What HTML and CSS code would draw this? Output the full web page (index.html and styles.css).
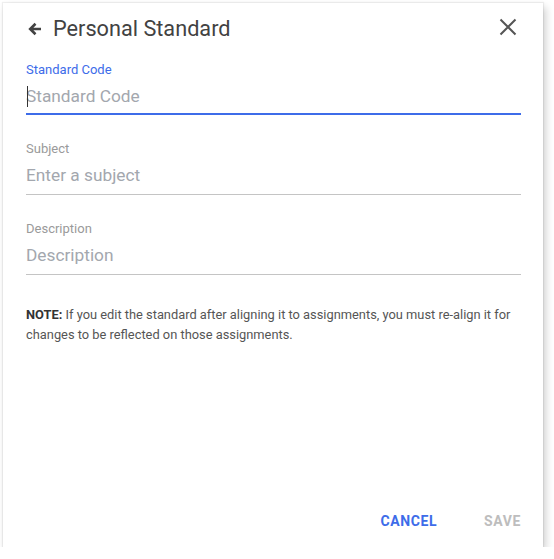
FILE: index.html
```html
<!DOCTYPE html>
<html>
<head>
<meta charset="utf-8">
<link rel="stylesheet" href="styles.css">
</head>
<body>
<div class="dialog">
  <div class="header">
    <svg class="back" width="16" height="16" viewBox="0 0 16 16"><path d="M14 8H3.5M8.5 2.8L3.2 8l5.3 5.2" fill="none" stroke="#424242" stroke-width="2.6" stroke-linejoin="miter"/></svg>
    <div class="title">Personal Standard</div>
    <svg class="close" width="18" height="18" viewBox="0 0 18 18"><path d="M1.5 1.5L16.5 16.5M16.5 1.5L1.5 16.5" stroke="#555" stroke-width="2" fill="none"/></svg>
  </div>
  <div class="field focused">
    <div class="label">Standard Code</div>
    <div class="input"><span class="caret"></span>Standard Code</div>
  </div>
  <div class="field">
    <div class="label">Subject</div>
    <div class="input">Enter a subject</div>
  </div>
  <div class="field">
    <div class="label">Description</div>
    <div class="input">Description</div>
  </div>
  <p class="note"><b>NOTE:</b> If you edit the standard after aligning it to assignments, you must re-align it for changes to be reflected on those assignments.</p>
  <div class="footer">
    <span class="btn cancel">CANCEL</span>
    <span class="btn save">SAVE</span>
  </div>
</div>
</body>
</html>
```
FILE: styles.css
```css
html, body { margin: 0; padding: 0; background: #fff; }
body { font-family: Roboto, "Noto Sans", sans-serif; }
.dialog {
  box-sizing: border-box;
  width: 540px;
  height: 544px;
  margin: 3px 0 0 3px;
  padding: 0 22px 0 23px;
  background: #fff;
  box-shadow: 0 0 1px 1px rgba(0,0,0,0.06), 3px 4px 8px rgba(0,0,0,0.18);
  display: flex;
  flex-direction: column;
}
.header {
  display: flex;
  align-items: center;
  height: 50px;
}
.back { margin: 1px 0 0 1px; }
.title {
  margin-left: 10px;
  font-size: 21.7px;
  color: #424242;
  flex: 1;
}
.close { margin-right: 4px; margin-top: -2px; }
.field {
  margin-top: 9px;
  border-bottom: 1px solid #c4c4c4;
  margin-bottom: 19px;
}
.field + .field { margin-top: 7px; }
.field.focused { border-bottom: 2px solid #3d6ce9; }
.label {
  font-size: 13px;
  line-height: 16px;
  color: #9a9a9a;
}
.focused .label { color: #3d6ce9; }
.input {
  font-size: 17.3px;
  line-height: 24px;
  padding: 6px 0 7px;
  color: #a3a7ae;
  position: relative;
}
.focused .input { padding-bottom: 5px; }
.caret {
  position: absolute;
  left: 1px;
  top: 8px;
  width: 1px;
  height: 21px;
  background: #333;
}
.note {
  margin: 11px 0 0;
  font-size: 12.85px;
  line-height: 20px;
  color: #555;
}
.note b { color: #333; font-weight: 700; }
.footer {
  margin-top: auto;
  display: flex;
  justify-content: flex-end;
  align-items: center;
  height: 52px;
}
.btn {
  font-size: 14px;
  font-weight: 700;
  letter-spacing: 0.6px;
}
.cancel { color: #3d6ce9; margin-right: 47px; }
.save { color: #bdbdbd; margin-right: 0; }
```
